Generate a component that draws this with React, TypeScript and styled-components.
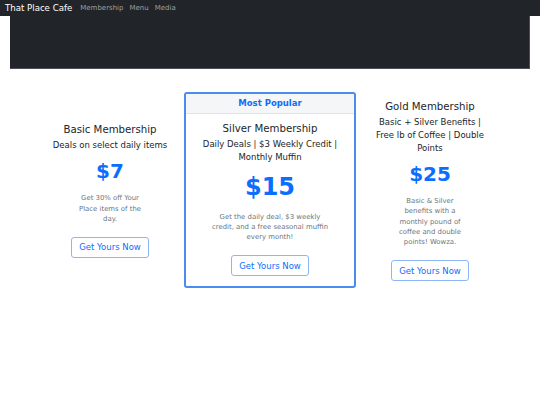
import styled, { createGlobalStyle } from 'styled-components';

const GlobalStyle = createGlobalStyle`
  * { box-sizing: border-box; }
  body {
    margin: 0;
    background: #fff;
    color: #212529;
    font-family: "DejaVu Sans", "Liberation Sans", sans-serif;
  }
`;

const Navbar = styled.nav`
  display: flex;
  align-items: center;
  height: 16px;
  padding: 0 5px;
  background-color: #212529;
`;

const Brand = styled.a`
  color: #fff;
  font-size: 8.6px;
  margin-right: 8px;
  white-space: nowrap;
`;

const NavLink = styled.a`
  color: rgba(255, 255, 255, 0.55);
  font-size: 7px;
  margin-right: 6px;
`;

const Hero = styled.header`
  height: 53px;
  margin: 0 10px;
  background-color: #212529;
  border-right: 1px solid #4a4f55;
  border-bottom: 1px solid #4a4f55;
`;

const PlanRow = styled.section`
  display: flex;
  align-items: center;
  justify-content: center;
  gap: 14px;
  margin-top: 23px;
  text-align: center;
`;

const Plan = styled.div<{ $featured?: boolean }>`
  width: ${({ $featured }) => ($featured ? '172px' : '120px')};
  border: ${({ $featured }) => ($featured ? '2px solid #4a8cf0' : 'none')};
  border-radius: 3px;
  overflow: hidden;
`;

const PlanHeader = styled.div`
  height: 20px;
  line-height: 19px;
  font-size: 8.5px;
  font-weight: bold;
  color: #0d6efd;
  background-color: #f5f6f7;
  border-bottom: 1px solid #e3e4e6;
`;

const PlanBody = styled.div<{ $featured?: boolean }>`
  padding: ${({ $featured }) => ($featured ? '7px 12px 10px' : '0')};
`;

const PlanTitle = styled.h3`
  margin: 0 0 1px;
  font-size: 10.2px;
  font-weight: normal;
  line-height: 16px;
`;

const PlanPerks = styled.p`
  margin: 0;
  font-size: 8.5px;
  line-height: 13px;
`;

const Price = styled.div<{ $featured?: boolean }>`
  margin: ${({ $featured }) => ($featured ? '9px 0 10px' : '7px 0 10px')};
  font-size: ${({ $featured }) => ($featured ? '24px' : '20px')};
  font-weight: bold;
  line-height: 1.2;
  color: #0d6efd;
`;

const Blurb = styled.p<{ $featured?: boolean }>`
  margin: 0 auto 11px;
  max-width: ${({ $featured }) => ($featured ? '118px' : '72px')};
  font-size: 6.9px;
  line-height: 10.3px;
  color: #6c757d;
`;

const JoinButton = styled.button`
  height: 21px;
  padding: 0 7px;
  font-family: inherit;
  font-size: 8.5px;
  color: #0d6efd;
  background: #fff;
  border: 1px solid #8db6f5;
  border-radius: 3px;
  cursor: pointer;
`;

const plans = [
  {
    title: 'Basic Membership',
    perks: 'Deals on select daily items',
    price: '$7',
    blurb: 'Get 30% off Your Place items of the day.',
  },
  {
    title: 'Silver Membership',
    perks: 'Daily Deals | $3 Weekly Credit | Monthly Muffin',
    price: '$15',
    blurb: 'Get the daily deal, $3 weekly credit, and a free seasonal muffin every month!',
    featured: true,
  },
  {
    title: 'Gold Membership',
    perks: 'Basic + Silver Benefits | Free lb of Coffee | Double Points',
    price: '$25',
    blurb: 'Basic & Silver benefits with a monthly pound of coffee and double points! Wowza.',
  },
];

export default function App() {
  return (
    <>
      <GlobalStyle />
      <Navbar>
        <Brand>That Place Cafe</Brand>
        <NavLink>Membership</NavLink>
        <NavLink>Menu</NavLink>
        <NavLink>Media</NavLink>
      </Navbar>
      <Hero />
      <PlanRow>
        {plans.map((plan) => (
          <Plan key={plan.title} $featured={plan.featured}>
            {plan.featured && <PlanHeader>Most Popular</PlanHeader>}
            <PlanBody $featured={plan.featured}>
              <PlanTitle>{plan.title}</PlanTitle>
              <PlanPerks>{plan.perks}</PlanPerks>
              <Price $featured={plan.featured}>{plan.price}</Price>
              <Blurb $featured={plan.featured}>{plan.blurb}</Blurb>
              <JoinButton>Get Yours Now</JoinButton>
            </PlanBody>
          </Plan>
        ))}
      </PlanRow>
    </>
  );
}
